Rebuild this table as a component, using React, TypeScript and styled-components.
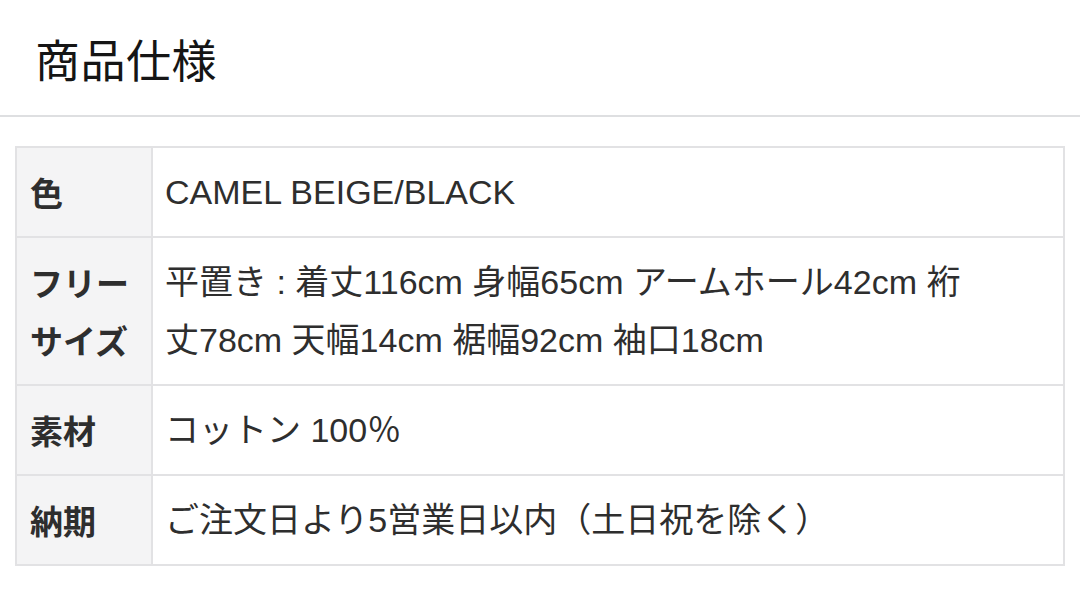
import React from 'react';
import styled, { createGlobalStyle } from 'styled-components';

const GlobalStyle = createGlobalStyle`
  html, body {
    margin: 0;
    padding: 0;
    background: #fff;
  }
  body {
    font-family: "Noto Sans CJK JP", "Noto Sans", sans-serif;
    color: #222;
  }
`;

const Page = styled.div`
  width: 1080px;
  height: 594px;
  overflow: hidden;
  background: #fff;
`;

const Header = styled.header`
  padding-left: 35px;
  display: flex;
  align-items: center;
  border-bottom: 2px solid #dedfe1;
  box-sizing: border-box;
  height: 117px;
`;

const Title = styled.h1`
  margin: 0;
  margin-top: 1px;
  font-size: 45px;
  font-weight: 400;
  color: #151515;
  letter-spacing: 0.5px;
`;

const Table = styled.table`
  margin: 29px 15px 0 15px;
  width: 1050px;
  border-collapse: collapse;
  border: 2px solid #e2e2e4;
`;

const Label = styled.th`
  width: 109px;
  background: #f4f4f5;
  border: 2px solid #e2e2e4;
  text-align: left;
  vertical-align: middle;
  padding: 15px 12px 15px 13px;
  font-size: 33px;
  font-weight: 700;
  line-height: 58px;
  color: #2e2e2e;
`;

const Value = styled.td`
  background: #fff;
  border: 2px solid #e2e2e4;
  padding: 15px 72px 15px 12px;
  font-family: "Liberation Sans", "Noto Sans CJK JP", sans-serif;
  font-size: 34px;
  font-weight: 400;
  line-height: 58px;
  color: #2e2e2e;
`;

const rows = [
  { label: '色', value: 'CAMEL BEIGE/BLACK' },
  {
    label: 'フリーサイズ',
    value: '平置き : 着丈116cm 身幅65cm アームホール42cm 裄丈78cm 天幅14cm 裾幅92cm 袖口18cm',
  },
  { label: '素材', value: 'コットン 100％' },
  { label: '納期', value: 'ご注文日より5営業日以内（土日祝を除く）' },
];

const App = () => (
  <Page>
    <GlobalStyle />
    <Header>
      <Title>商品仕様</Title>
    </Header>
    <Table>
      <tbody>
        {rows.map((r) => (
          <tr key={r.label}>
            <Label>{r.label}</Label>
            <Value>{r.value}</Value>
          </tr>
        ))}
      </tbody>
    </Table>
  </Page>
);

export default App;
